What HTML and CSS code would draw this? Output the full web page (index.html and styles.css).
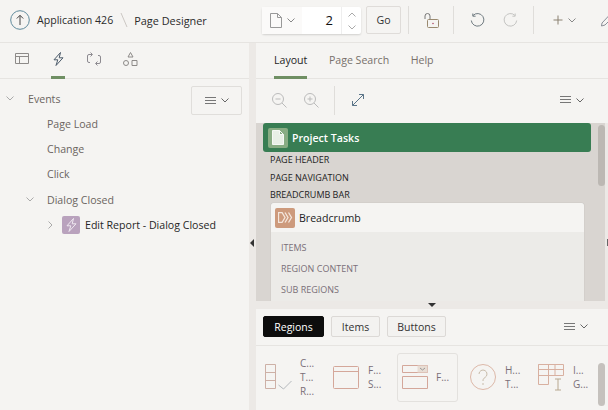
FILE: index.html
```html
<!DOCTYPE html>
<html lang="en">
<head>
<meta charset="utf-8">
<title>Page Designer</title>
<link rel="stylesheet" href="styles.css">
</head>
<body>
<header class="top">
  <div class="crumbs">
    <svg class="up" width="20" height="20" viewBox="0 0 20 20"><circle cx="10" cy="10" r="9.300" fill="none" stroke="#5f8a9c" stroke-width="1"/><path d="M10 15V5.500M6.800 8.500 10 5.300l3.200 3.200" fill="none" stroke="#444" stroke-width="1"/></svg>
    <span class="crumb">Application 426</span>
    <svg class="sep" width="8" height="16" viewBox="0 0 8 16"><path d="M1 1l6 14" stroke="#ccc8c4" fill="none"/></svg>
    <span class="crumb cur">Page Designer</span>
  </div>
  <div class="pagepick">
    <div class="pp-icon">
      <svg width="12" height="15" viewBox="0 0 12 15"><path d="M.5.500h7l4 4v10H.5zM7.500.5v4h4" fill="none" stroke="#999" stroke-width="1"/></svg>
      <svg width="8" height="5" viewBox="0 0 8 5"><path d="M.5.500 4 4 7.500.5" fill="none" stroke="#888"/></svg>
    </div>
    <span class="pp-num">2</span>
    <div class="pp-spin">
      <svg width="8" height="5" viewBox="0 0 8 5"><path d="M.5 4.500 4 1l3.500 3.500" fill="none" stroke="#aaa"/></svg>
      <svg width="8" height="5" viewBox="0 0 8 5"><path d="M.5.500 4 4 7.500.5" fill="none" stroke="#aaa"/></svg>
    </div>
  </div>
  <button class="go">Go</button>
  <span class="vr vr-a"></span>
  <svg class="lock" width="15" height="15" viewBox="0 0 15 15"><path d="M1 6V3a2.500 2.500 0 0 1 5 0v3" fill="none" stroke="#777"/><rect x="3.500" y="6.500" width="11" height="8" rx="1" fill="none" stroke="#9a8a70"/><circle cx="9" cy="10.500" r=".8" fill="#b0506a"/></svg>
  <span class="vr vr-b"></span>
  <svg class="undo" width="15" height="15" viewBox="0 0 15 15"><path d="M3 2.500a6.300 6.300 0 1 1-1.700 5M2.800.5v2.700h2.800" fill="none" stroke="#6f7a80"/></svg>
  <svg class="redo" width="15" height="15" viewBox="0 0 15 15"><path d="M12 2.500a6.300 6.300 0 1 0 1.700 5M12.200.5v2.700H9.400" fill="none" stroke="#c4c4c2"/></svg>
  <span class="vr vr-c"></span>
  <svg class="plus" width="10" height="10" viewBox="0 0 10 10"><path d="M5 .5v9M.5 5h9" stroke="#8a8070" fill="none"/></svg>
  <svg class="chev" width="8" height="5" viewBox="0 0 8 5"><path d="M.5.500 4 4 7.500.5" fill="none" stroke="#888"/></svg>
  <svg class="wrench" width="14" height="14" viewBox="0 0 14 14"><path d="M.5 13 1 10 9 1.500l3 2.500-8 8z" fill="none" stroke="#8a8f98"/></svg>
</header>
<div class="main">
  <aside class="left">
    <nav class="ltabs">
      <span class="ltab"><svg width="14" height="11" viewBox="0 0 14 11"><path d="M.5.500h13v10H.5zM.5 3.500h13M4.500 3.500v7" fill="none" stroke="#8d8a88"/></svg></span>
      <span class="ltab on"><svg width="11" height="14" viewBox="0 0 11 14"><path d="M7.500.500 1 7.800h3.800L3 13.500 10 5.800H6.200z" fill="none" stroke="#4b5a6a"/></svg></span>
      <span class="ltab"><svg width="14" height="14" viewBox="0 0 14 14"><path d="M5 2.500H2A1.500 1.500 0 0 0 .5 4v5A1.500 1.500 0 0 0 2 10.500h1M9 11.500h3a1.500 1.500 0 0 0 1.500-1.500V5A1.500 1.500 0 0 0 12 3.500h-1M3.500.5l2 2-2 2M10.500 9.500l-2 2 2 2" fill="none" stroke="#8d8a90"/></svg></span>
      <span class="ltab"><svg width="15" height="14" viewBox="0 0 15 14"><path d="M7.500.500 10 5H5zM9 8.500h5v5H9z" fill="none" stroke="#8d8a88"/><circle cx="3" cy="11" r="2.500" fill="none" stroke="#8d8a88"/></svg></span>
    </nav>
    <div class="tree">
      <div class="menu-row"><button class="menu-btn">
        <svg width="11" height="8" viewBox="0 0 11 8"><path d="M0 .5h11M0 3.500h11M0 6.500h11" stroke="#777"/></svg>
        <svg width="8" height="5" viewBox="0 0 8 5"><path d="M.5.500 4 4 7.500.5" fill="none" stroke="#666"/></svg>
      </button></div>
      <div class="node n0"><svg width="8" height="5" viewBox="0 0 8 5"><path d="M.5.500 4 4 7.500.5" fill="none" stroke="#aaa"/></svg><span>Events</span></div>
      <div class="node n1">Page Load</div>
      <div class="node n1">Change</div>
      <div class="node n1">Click</div>
      <div class="node n2"><svg width="8" height="5" viewBox="0 0 8 5"><path d="M.5.500 4 4 7.500.5" fill="none" stroke="#aaa"/></svg><span>Dialog Closed</span></div>
      <div class="node n3">
        <svg width="5" height="8" viewBox="0 0 5 8"><path d="M.5.500 4 4 .5 7.500" fill="none" stroke="#aaa"/></svg>
        <span class="evt"><svg width="11" height="14" viewBox="0 0 11 14"><path d="M7.500.500 1 7.800h3.800L3 13.500 10 5.800H6.200z" fill="none" stroke="#efe8f0"/></svg></span>
        <span class="evt-t">Edit Report - Dialog Closed</span>
      </div>
    </div>
  </aside>
  <div class="vsplit"><span class="arrow-l"></span></div>
  <section class="right">
    <div class="upper">
      <nav class="rtabs">
        <span class="rtab on">Layout</span>
        <span class="rtab">Page Search</span>
        <span class="rtab">Help</span>
      </nav>
      <div class="tools">
        <svg class="t1" width="15" height="15" viewBox="0 0 15 15"><circle cx="6" cy="6" r="5.500" fill="none" stroke="#bbb"/><path d="M3.500 6h5M10 10l4.500 4.500" stroke="#bbb" fill="none"/></svg>
        <svg class="t2" width="15" height="15" viewBox="0 0 15 15"><circle cx="6" cy="6" r="5.500" fill="none" stroke="#bbb"/><path d="M3.500 6h5M6 3.500v5M10 10l4.500 4.500" stroke="#bbb" fill="none"/></svg>
        <span class="vr vr-t"></span>
        <svg class="t3" width="12" height="12" viewBox="0 0 12 12"><path d="M.5 11.500l11-11M7 .5h4.500V5M.5 7v4.500H5" fill="none" stroke="#5a7488"/></svg>
        <button class="menu-plain">
          <svg width="11" height="8" viewBox="0 0 11 8"><path d="M0 .5h11M0 3.500h11M0 6.500h11" stroke="#777"/></svg>
          <svg width="8" height="5" viewBox="0 0 8 5"><path d="M.5.500 4 4 7.500.5" fill="none" stroke="#666"/></svg>
        </button>
      </div>
      <div class="canvas">
        <div class="canvas-in">
          <div class="banner">
            <span class="b-icon"><svg width="12" height="15" viewBox="0 0 12 15"><path d="M.5.500h7l4 4v10H.5zM7.500.5v4h4" fill="#e8efe6" stroke="#f5f8f4"/></svg></span>
            <span>Project Tasks</span>
          </div>
          <div class="lbl l1">PAGE HEADER</div>
          <div class="lbl l2">PAGE NAVIGATION</div>
          <div class="lbl">BREADCRUMB BAR</div>
          <div class="card">
            <div class="card-h">
              <span class="c-icon"><svg width="15" height="11" viewBox="0 0 15 11"><path d="M.5.500H4l3 5-3 5H.5zM7 .5l3 5-3 5M10.500.5l3 5-3 5" fill="none" stroke="#f4e6dc" stroke-width="1.300"/></svg></span>
              <span>Breadcrumb</span>
            </div>
            <div class="card-b">
              <div>ITEMS</div>
              <div>REGION CONTENT</div>
              <div>SUB REGIONS</div>
            </div>
          </div>
        </div>
        <div class="scroll"><span class="thumb"></span></div>
      </div>
    </div>
    <div class="rsplit"><span class="arrow-r"></span></div>
    <div class="hsplit"><span class="arrow-d"></span></div>
    <div class="lower">
      <div class="gal-bar">
        <button class="pill dark">Regions</button>
        <button class="pill p-items">Items</button>
        <button class="pill p-buttons">Buttons</button>
        <button class="menu-plain">
          <svg width="11" height="8" viewBox="0 0 11 8"><path d="M0 .5h11M0 3.500h11M0 6.500h11" stroke="#777"/></svg>
          <svg width="8" height="5" viewBox="0 0 8 5"><path d="M.5.500 4 4 7.500.5" fill="none" stroke="#666"/></svg>
        </button>
      </div>
      <div class="gallery">
        <div class="g g1">
          <svg width="27" height="26" viewBox="0 0 27 26"><path d="M.5.500h10v24H.5zM.5 8.500h10M.5 16.500h10" fill="none" stroke="#cdb0a6"/><path d="M13.500 21l5 4 8-8" fill="none" stroke="#b4b8bc"/></svg>
          <div class="g-t"><span>C...</span><span>T...</span><span>R...</span></div>
        </div>
        <div class="g g2">
          <svg width="26" height="23" viewBox="0 0 26 23"><path d="M.5 1.500a1 1 0 0 1 1-1h23a1 1 0 0 1 1 1v20a1 1 0 0 1-1 1h-23a1 1 0 0 1-1-1zM.5 5.500h25" fill="none" stroke="#d4a79a"/></svg>
          <div class="g-t"><span>F...</span><span>S...</span></div>
        </div>
        <div class="g g3">
          <svg width="26" height="24" viewBox="0 0 26 24"><path d="M.5.500h25v7H.5zM.5 11.500h25v12H.5z" fill="none" stroke="#d4a79a"/><path d="M15.500.5h10v7h-10z" fill="#e8ddd4"/><path d="M18 3l2.500 2 2.500-2" fill="none" stroke="#999"/></svg>
          <div class="g-t"><span>F...</span></div>
        </div>
        <div class="g g4">
          <svg width="26" height="26" viewBox="0 0 26 26"><circle cx="13" cy="13" r="12.500" fill="none" stroke="#dcb8a8"/><path d="M9 10a4 4 0 1 1 6 3.500c-1.500 1-2 1.500-2 3.500M13 19v2" fill="none" stroke="#c8bcaa"/></svg>
          <div class="g-t"><span>H...</span><span>T...</span></div>
        </div>
        <div class="g g5">
          <svg width="26" height="27" viewBox="0 0 26 27"><path d="M.5.500h25v11H.5zM.5.500v20h10V.5M.5 5.500h25M.5 11.500h10M17 .5v11" fill="none" stroke="#d8b0a0"/><path d="M17 15h6M17 26h6M20 15v11" fill="none" stroke="#b8a890"/></svg>
          <div class="g-t"><span>I...</span><span>G...</span></div>
        </div>
        <div class="scroll2"></div>
      </div>
    </div>
  </section>
</div>
</body>
</html>
```
FILE: styles.css
```css
* { box-sizing: border-box; }
html, body { margin: 0; height: 100%; overflow: hidden; }
body {
  width: 608px; height: 410px; background: #f5f4f2;
  font-family: "Open Sans", sans-serif; font-size: 10.6px; color: #262626;
  display: flex; flex-direction: column;
}
svg { display: block; flex: none; }
button { font-family: inherit; padding: 0; }
.top {
  height: 43px; flex: none; border-bottom: 1px solid #e6e4e1;
  display: flex; align-items: center; padding: 0 0 2px 10px; overflow: hidden;
}
.crumbs { width: 252px; flex: none; display: flex; align-items: center; }
.crumb { color: #2b2b2b; white-space: nowrap; }
.crumb.cur { font-size: 10.9px; font-weight: 500; }
.up { margin-right: 7px; }
.sep { margin: 0 6px 0 7px; }
.pagepick {
  width: 99px; height: 27px; margin-top: 1px; background: #fff; display: flex; border-radius: 2px; flex: none;
  box-shadow: 0 1px 2px rgba(0,0,0,.15);
}
.pp-icon { display: flex; align-items: center; gap: 5px; padding-left: 8px; width: 40px; background: #fbfaf9; }
.pp-num { flex: 1; text-align: right; padding-right: 8px; font-size: 13px; line-height: 27px; color: #111; }
.pp-spin { width: 20px; border-left: 1px solid #eee; display: flex; flex-direction: column; align-items: center; justify-content: center; gap: 8px; }
.go {
  margin-left: 5px; width: 35px; height: 28px; flex: none; background: #f5f4f2; border: 1px solid #dfdcd9; border-radius: 2px; font-size: 10.6px; color: #333;
}
.vr { width: 1px; height: 28px; background: #dfddda; flex: none; }
.vr-a { margin-left: 7px; }
.lock { margin-left: 15px; }
.vr-b { margin-left: 14px; }
.undo { margin-left: 16px; }
.redo { margin-left: 18px; }
.vr-c { margin-left: 15px; }
.plus { margin-left: 19px; }
.chev { margin-left: 5px; }
.wrench { margin-left: 25px; }
.main { flex: 1; display: flex; min-height: 0; }
.left { width: 249px; flex: none; }
.ltabs { height: 36px; display: flex; border-bottom: 1px solid #e6e4e1; padding-left: 15px; }
.ltab { display: flex; align-items: center; justify-content: center; height: 36px; padding-bottom: 2px; border-bottom: 3px solid transparent; flex: none; }
.ltab:nth-child(1) { width: 14px; margin-right: 22px; }
.ltab:nth-child(2) { width: 14px; margin-right: 22px; }
.ltab:nth-child(3) { width: 14px; margin-right: 22px; }
.ltab:nth-child(4) { width: 15px; }
.ltab.on { border-bottom-color: #6f8f63; }
.tree { position: relative; padding-top: 7px; color: #6b6561; }
.menu-row { position: absolute; right: 7px; top: 7px; }
.menu-btn { width: 51px; height: 29px; border: 1px solid #e0dedb; background: #f5f4f2; border-radius: 2px; display: flex; align-items: center; justify-content: center; gap: 5px; }
.node { display: flex; align-items: center; height: 25px; white-space: nowrap; }
.n0 { padding-left: 6px; gap: 14px; }
.n1 { padding-left: 47px; }
.n2 { padding-left: 26px; gap: 13px; margin-top: 1px; }
.n3 { padding-left: 48px; }
.evt { width: 18px; height: 18px; margin-left: 9px; border-radius: 2px; background: #b9a2bd; display: flex; align-items: center; justify-content: center; }
.evt-t { margin-left: 5px; color: #262626; }
.vsplit { width: 7px; flex: none; background: #ece9e6; padding-top: 196px; padding-left: 1px; }
.arrow-l { display: block; width: 0; height: 0; border-top: 4px solid transparent; border-bottom: 4px solid transparent; border-right: 4px solid #333; }
.right { flex: 1; min-width: 0; display: flex; flex-direction: column; position: relative; }
.upper { height: 258px; flex: none; display: flex; flex-direction: column; }
.rtabs { height: 36px; flex: none; display: flex; gap: 21.5px; padding-left: 18px; border-bottom: 1px solid #e6e4e1; color: #77706b; }
.rtab { height: 36px; line-height: 34px; white-space: nowrap; }
.rtab.on { color: #262626; border-bottom: 3px solid #6f8f63; }
.tools { height: 44px; flex: none; display: flex; align-items: center; padding: 0 0 2px 16px; }
.t1 { margin-right: 17px; }
.vr-t { margin-left: 15px; height: 29px; }
.t3 { margin-left: 17px; }
.menu-plain { margin-left: auto; margin-right: 24px; background: none; border: 0; display: flex; align-items: center; gap: 5px; }
.canvas { flex: 1; min-height: 0; background: #d9d5d1; display: flex; overflow: hidden; margin-right: 3px; }
.canvas-in { flex: 1; min-width: 0; padding: 0 7px; }
.banner { height: 29px; background: #387d53; border-radius: 3px; color: #fff; display: flex; align-items: center; padding-left: 5px; gap: 4px; font-weight: 600; }
.b-icon { width: 20px; height: 20px; border-radius: 2px; background: #88ac83; display: flex; align-items: center; justify-content: center; }
.lbl { font-size: 9px; color: #222; height: 17px; line-height: 17px; margin-left: 7px; white-space: nowrap; }
.l1 { margin-top: -1px; }
.l2 { margin-top: 1px; }
.card { margin: 0 7px 0 8px; background: #ecebe8; height: 120px; border-radius: 3px 3px 0 0; box-shadow: 0 0 1px rgba(0,0,0,.3); }
.card-h { height: 29px; background: #f5f4f2; border-radius: 3px 3px 0 0; display: flex; align-items: center; padding-left: 4px; gap: 4px; color: #222; }
.c-icon { width: 20px; height: 20px; border-radius: 2px; background: #cd9a7c; display: flex; align-items: center; justify-content: center; }
.card-b { padding: 5px 0 0 10px; font-size: 9px; color: #7a6f78; line-height: 21px; }
.scroll { width: 7px; flex: none; }
.thumb { display: block; width: 7px; height: 61px; background: #bcb8b3; border-radius: 4px; margin-top: 2px; }
.rsplit { position: absolute; right: 0; top: 80px; width: 3px; height: 178px; background: #ece9e6; }
.arrow-r { position: absolute; right: 0; top: 116px; width: 1px; height: 7px; background: #666; }
.hsplit { height: 8px; flex: none; background: #ece9e6; display: flex; justify-content: center; }
.arrow-d { width: 0; height: 0; border-left: 4px solid transparent; border-right: 4px solid transparent; border-top: 4px solid #333; margin-top: 2px; }
.lower { flex: 1; min-height: 0; }
.gal-bar { height: 37px; display: flex; align-items: center; padding: 0 0 1px 7px; gap: 7px; border-bottom: 1px solid #e6e4e1; }
.pill { height: 21px; border: 1px solid #dcd9d6; background: #f3f2f0; border-radius: 2px; width: 59px; font-size: 10.5px; color: #333; }
.pill.p-items { width: 49px; }
.pill.dark { width: 61px; background: #0d0d0d; color: #fff; border-color: #0d0d0d; }
.gal-bar .menu-plain { margin-right: 20px; }
.gallery { display: flex; position: relative; height: 64px; padding: 0 0 2px 9px; align-items: center; font-size: 10px; color: #7a6f78; }
.g { display: flex; align-items: center; flex: none; gap: 9px; }
.g-t { display: flex; flex-direction: column; line-height: 14px; }
.g1 { width: 68px; gap: 8px; }
.g2 { width: 64px; }
.g3 { width: 61px; height: 49px; gap: 8px; border: 1px solid #e3e1de; border-radius: 3px; padding-left: 4px; margin-right: 12px; }
.g4 { width: 68px; }
.g5 { width: 60px; }
.scroll2 { position: absolute; right: 3px; top: 17px; width: 7px; height: 43px; background: #c5c1bd; border-radius: 4px; }
```
